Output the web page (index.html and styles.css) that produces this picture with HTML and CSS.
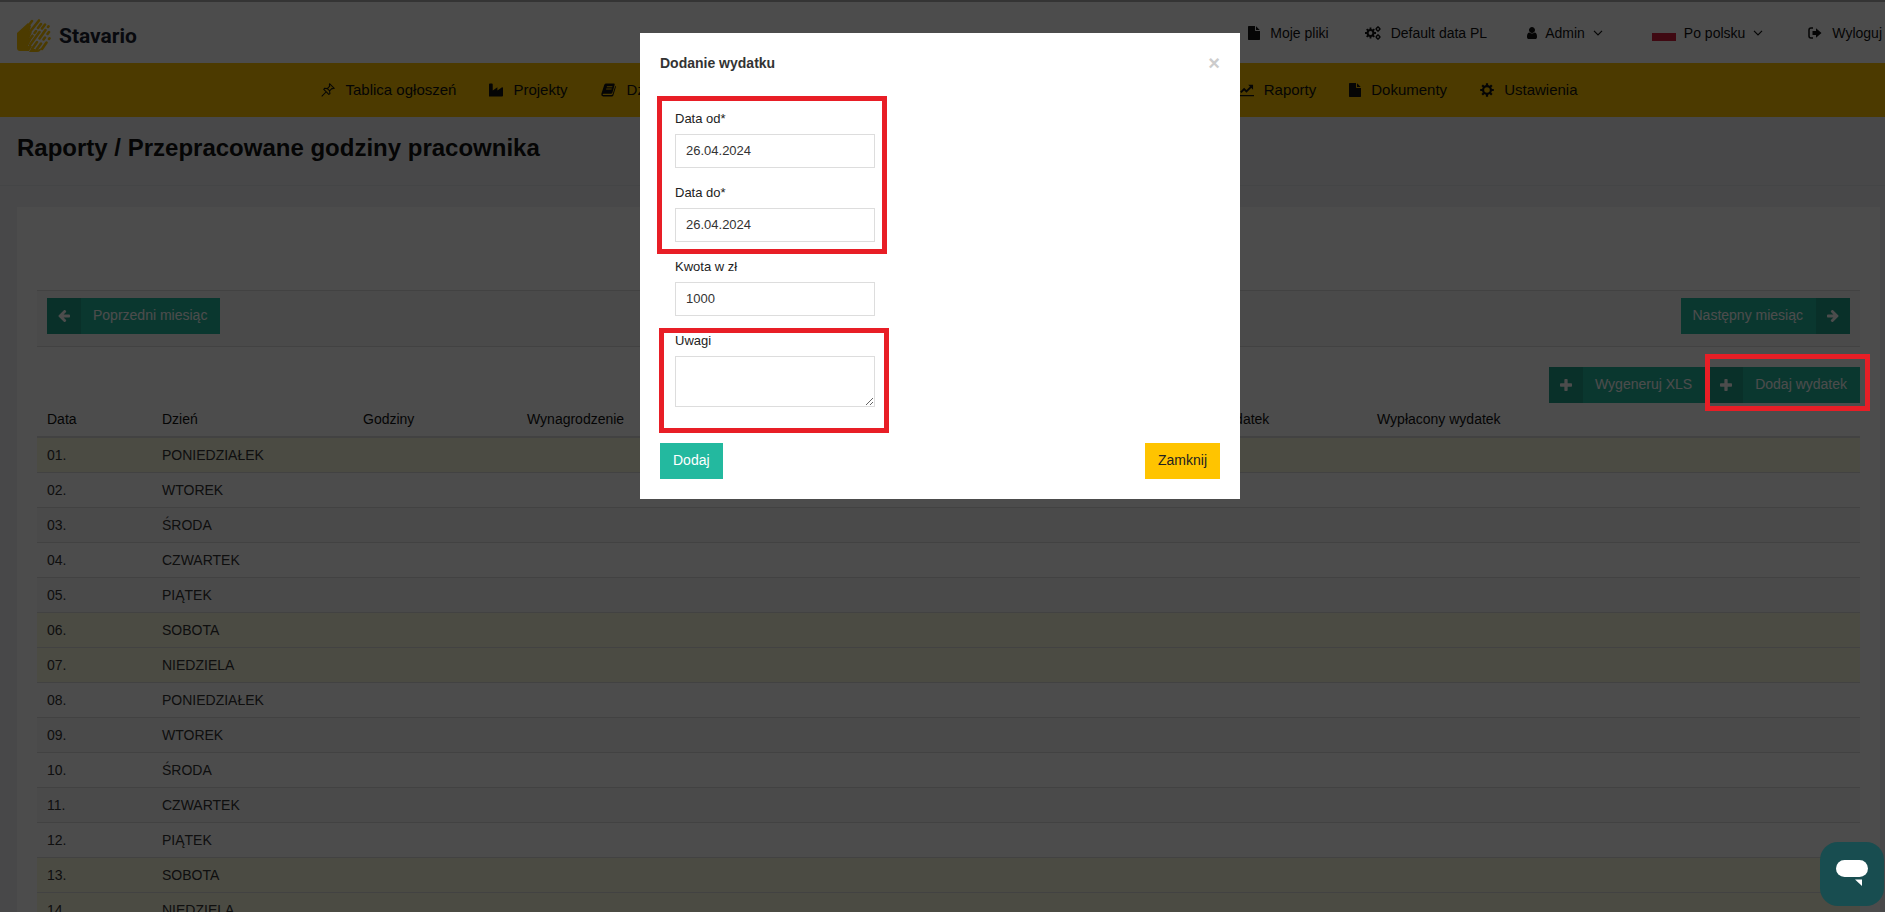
FILE: index.html
```html
<!DOCTYPE html>
<html lang="pl">
<head>
<meta charset="utf-8">
<title>Stavario</title>
<link rel="stylesheet" href="styles.css">
</head>
<body>
<svg class="sprite" aria-hidden="true">
  <symbol id="i-file" viewBox="128 0 1536 1792"><path d="M1152 512v-472q22 14 36 28l408 408q14 14 28 36h-472zm-128 32q0 40 28 68t68 28h544v1056q0 40-28 68t-68 28h-1344q-40 0-68-28t-28-68v-1600q0-40 28-68t68-28h800v544z"/></symbol>
  <symbol id="i-plus" viewBox="192 128 1408 1408"><path d="M1600 736v192q0 40-28 68t-68 28h-416v416q0 40-28 68t-68 28h-192q-40 0-68-28t-28-68v-416h-416q-40 0-68-28t-28-68v-192q0-40 28-68t68-28h416v-416q0-40 28-68t68-28h192q40 0 68 28t28 68v416h416q40 0 68 28t28 68z"/></symbol>
  <symbol id="i-left" viewBox="128 190 1536 1540"><path d="M1664 896v128q0 53-32.5 90.5t-84.5 37.5h-704l293 294q38 36 38 90t-38 90l-75 76q-37 37-90 37-52 0-91-37l-651-652q-37-37-37-90 0-52 37-91l651-650q38-38 91-38 52 0 90 38l75 74q38 38 38 91t-38 91l-293 293h704q52 0 84.5 37.5t32.5 90.5z"/></symbol>
  <symbol id="i-user" viewBox="256 128 1280 1536"><path d="M1536 1399q0 109-62.5 187t-150.5 78h-854q-88 0-150.5-78t-62.5-187q0-85 8.5-160.5t31.5-152 58.5-131 94-89 134.5-34.5q131 128 313 128t313-128q76 0 134.5 34.5t94 89 58.5 131 31.5 152 8.5 160.5zm-256-887q0 159-112.5 271.5t-271.5 112.5-271.5-112.5-112.5-271.5 112.5-271.5 271.5-112.5 271.5 112.5 112.5 271.5z"/></symbol>
  <symbol id="i-cog" viewBox="0 0 14 14"><circle cx="7" cy="7" r="3.9" fill="none" stroke="currentColor" stroke-width="2.2"/><g stroke="currentColor" stroke-width="2.2"><path d="M7 .2v3M7 10.8v3M.2 7h3M10.8 7h3M2.2 2.2l2 2M9.8 9.8l2 2M11.8 2.2l-2 2M4.2 9.8l-2 2"/></g></symbol>
  <symbol id="i-cogs" viewBox="0 0 16 14"><g fill="none" stroke="currentColor"><circle cx="5.5" cy="7" r="2.9" stroke-width="2"/><path stroke-width="1.8" d="M5.5 1.6v2M5.5 10.4v2M0 7h2M9 7h2M1.7 3.2l1.4 1.4M7.9 9.4l1.4 1.4M9.3 3.2 7.9 4.6M3.1 9.4l-1.4 1.4"/><circle cx="13" cy="3" r="1.6" stroke-width="1.4"/><circle cx="13" cy="11" r="1.6" stroke-width="1.4"/><path stroke-width="1.2" d="M13 0v1M13 5v1M10.4 3h1M14.8 3h1M13 8v1M13 13v1M10.4 11h1M14.8 11h1"/></g></symbol>
  <symbol id="i-pin" viewBox="0 0 16 16"><g fill="none" stroke="currentColor" stroke-width="1.2"><path d="M10 1l5 5-1.500.600-.900-.4-2.800 2.800.4 3.200-1.300.800L3.200 7.300 4 6l3.200.4L10 3.600l-.5-1.200zM6 10 .8 15.200M7.200 6.400l3 3"/></g></symbol>
  <symbol id="i-industry" viewBox="0 0 15 14"><path d="M0 14V1q0-1 1-1h2q1 0 1 1v6.500L9 4v3.500L14 4q1-.3 1 1v8q0 1-1 1z"/></symbol>
  <symbol id="i-book" viewBox="0 0 16 14"><path fill-rule="evenodd" d="M5.200.5h7.600q1.200 0 .9 1.200l-2.300 8.100q-.4 1-1.400 1H2.500q-1 0-.7 1.200h8.800q.8 0 1.100-.9L14.300 2.800q.8.4.5 1.400l-2.500 8.400q-.4 1-1.400 1H2.200Q0 13.400.3 11L3.300 1.800Q3.900.6 5.200.5zM6 3.200l-.3 1h5.500l.3-1zM5.300 5.600l-.3 1h5.500l.3-1z"/></symbol>
  <symbol id="i-chart" viewBox="0 0 17 14"><path fill="none" stroke="currentColor" stroke-width="1.500" d="M1 0v13h16"/><path fill="none" stroke="currentColor" stroke-width="2" d="M3 9.500 6.500 6 9 8.500 14 3.500"/><path d="M10.800 1.500H16v5.200z"/></symbol>
  <symbol id="i-out" viewBox="0 0 14 12"><path fill="none" stroke="currentColor" stroke-width="1.500" d="M5 1H3Q1 1 1 3v6q0 2 2 2h2"/><path d="M4.500 4H8V1.200L13.500 6 8 10.800V8H4.500z"/></symbol>
  <symbol id="i-down" viewBox="0 0 10 6"><path fill="none" stroke="currentColor" stroke-width="1.200" d="M1 .8l4 4 4-4"/></symbol>
</svg>

<div class="page">
  <header class="topbar">
    <a class="brand" href="#">
      <svg class="brand-mark" viewBox="0 0 34 33" aria-hidden="true"><path fill="#fdc500" d="M0 14 11 4 14 7 12 14l3-1-3 7 2 1-3 6 4 0-3 5H3q-3 0-3-3z"/><path fill="#fdc500" d="M12 33l2-3 4 0 2 1 5-2-2 3q-1 1-3 1z"/><g stroke="#fdc500" stroke-width="2.600" stroke-linecap="round"><path d="M9 10l6-8M12 14l10-12.500M13 20l2.500-3.300M17.500 14l1.500-2M21 9l3-4M13 26l9.500-13M25 9.500l3-4M15 30l5-7M22.500 19.500l6-8.500M31 8l.5-.7M20 30l4-5.500M26.500 20.500l1.500-2M30.500 15l1.500-2M25 30l4.500-6.500M32 20l.5-.7"/></g></svg>
      <span>Stavario</span>
    </a>
    <nav class="account">
      <a href="#"><svg class="w12"><use href="#i-file"/></svg>Moje pliki</a>
      <a href="#"><svg class="w16"><use href="#i-cogs"/></svg>Default data PL</a>
      <button class="menu" type="button"><svg class="w10"><use href="#i-user"/></svg>Admin<svg class="w10"><use href="#i-down"/></svg></button>
      <button class="menu" type="button"><span class="flag"></span>Po polsku<svg class="w10"><use href="#i-down"/></svg></button>
      <a href="#"><svg class="w14"><use href="#i-out"/></svg>Wyloguj</a>
    </nav>
  </header>

  <nav class="mainnav">
    <div class="mainnav-list">
      <a href="#"><svg class="w16"><use href="#i-pin"/></svg>Tablica ogłoszeń</a>
      <a href="#"><svg class="w14"><use href="#i-industry"/></svg>Projekty</a>
      <a href="#"><svg class="w16"><use href="#i-book"/></svg>Dziennik</a>
      <a class="push" href="#"><svg class="w16"><use href="#i-chart"/></svg>Raporty</a>
      <a href="#"><svg class="w12"><use href="#i-file"/></svg>Dokumenty</a>
      <a href="#"><svg class="w14"><use href="#i-cog"/></svg>Ustawienia</a>
    </div>
  </nav>

  <div class="heading"><h1>Raporty / Przepracowane godziny pracownika</h1></div>

  <main class="panel">
    <div class="months">
      <button class="btn-icon" type="button"><span class="cell"><svg><use href="#i-left"/></svg></span><span class="label">Poprzedni miesiąc</span></button>
      <button class="btn-icon" type="button"><span class="label">Następny miesiąc</span><span class="cell"><svg class="flip"><use href="#i-left"/></svg></span></button>
    </div>
    <div class="actions">
      <button class="btn-icon" type="button"><span class="cell"><svg><use href="#i-plus"/></svg></span><span class="label">Wygeneruj XLS</span></button>
      <button class="btn-icon" type="button"><span class="cell"><svg><use href="#i-plus"/></svg></span><span class="label">Dodaj wydatek</span></button>
    </div>
    <table class="days">
      <colgroup><col class="c-date"><col class="c-day"><col class="c-hours"><col class="c-mid"><col class="c-mid"><col class="c-mid"><col class="c-mid"><col class="c-cost"><col></colgroup>
      <thead><tr><th>Data</th><th>Dzień</th><th>Godziny</th><th>Wynagrodzenie</th><th></th><th></th><th></th><th>Wydatek</th><th>Wypłacony wydatek</th></tr></thead>
      <tbody>
        <tr class="off"><td>01.</td><td>PONIEDZIAŁEK</td><td colspan="7"></td></tr>
        <tr><td>02.</td><td>WTOREK</td><td colspan="7"></td></tr>
        <tr><td>03.</td><td>ŚRODA</td><td colspan="7"></td></tr>
        <tr><td>04.</td><td>CZWARTEK</td><td colspan="7"></td></tr>
        <tr><td>05.</td><td>PIĄTEK</td><td colspan="7"></td></tr>
        <tr class="off"><td>06.</td><td>SOBOTA</td><td colspan="7"></td></tr>
        <tr class="off"><td>07.</td><td>NIEDZIELA</td><td colspan="7"></td></tr>
        <tr><td>08.</td><td>PONIEDZIAŁEK</td><td colspan="7"></td></tr>
        <tr><td>09.</td><td>WTOREK</td><td colspan="7"></td></tr>
        <tr><td>10.</td><td>ŚRODA</td><td colspan="7"></td></tr>
        <tr><td>11.</td><td>CZWARTEK</td><td colspan="7"></td></tr>
        <tr><td>12.</td><td>PIĄTEK</td><td colspan="7"></td></tr>
        <tr class="off"><td>13.</td><td>SOBOTA</td><td colspan="7"></td></tr>
        <tr class="off"><td>14.</td><td>NIEDZIELA</td><td colspan="7"></td></tr>
      </tbody>
    </table>
  </main>
</div>

<div class="backdrop">
  <form class="modal" role="dialog" aria-labelledby="modal-title">
    <div class="modal-head">
      <h2 id="modal-title">Dodanie wydatku</h2>
      <button class="close" type="button" aria-label="Zamknij okno">×</button>
    </div>
    <div class="fields">
      <label for="from">Data od*</label>
      <input id="from" type="text" value="26.04.2024">
      <label for="to">Data do*</label>
      <input id="to" type="text" value="26.04.2024">
      <label for="amount">Kwota w zł</label>
      <input id="amount" type="text" value="1000">
      <label for="notes">Uwagi</label>
      <textarea id="notes"></textarea>
    </div>
    <div class="modal-foot">
      <button class="btn save" type="submit">Dodaj</button>
      <button class="btn cancel" type="button">Zamknij</button>
    </div>
    <span class="mark mark-dates"></span>
    <span class="mark mark-notes"></span>
  </form>
</div>
<span class="mark mark-add"></span>
<button class="chat" type="button" aria-label="Czat"><svg viewBox="0 0 32 28"><rect width="32" height="17" rx="8.500" fill="#fff"/><path fill="#fff" d="M19 19.500h7v6.500z"/></svg></button>
</body>
</html>
```
FILE: styles.css
```css
* { box-sizing: border-box; }
body {
  margin: 0;
  height: 100vh;
  overflow: hidden;
  position: relative;
  background: #f0f2f5;
  color: #333;
  font: 14px/18px "Liberation Sans", Arial, sans-serif;
}
button, input, textarea { font: inherit; color: inherit; border-radius: 0; }
button { border: 0; background: none; padding: 0; cursor: pointer; }
a { color: inherit; text-decoration: none; }
svg { fill: currentColor; flex: none; }
.sprite { position: absolute; width: 0; height: 0; }
.w10 { width: 10px; height: 12px; }
.w12 { width: 12px; height: 14px; }
.w14 { width: 14px; height: 14px; }
.w16 { width: 16px; height: 14px; }

/* Header */
.topbar {
  display: flex;
  justify-content: space-between;
  height: 63px;
  padding: 0 3px 0 17px;
  border-top: 2px solid #adadad;
  background: #fff;
  color: #111;
}
.brand {
  display: flex;
  align-items: center;
  gap: 8px;
  padding-top: 6px;
  font: bold 21px/32px Roboto, sans-serif;
  color: #1c2230;
}
.brand-mark { width: 34px; height: 33px; }
.account { display: flex; align-items: center; gap: 36px; }
.account a, .menu { display: flex; align-items: center; gap: 10px; }
.menu { gap: 8px; padding: 0 9px 0 4px; }
.flag { width: 24px; height: 16px; background: linear-gradient(#fff 50%, #d4213d 50%); }

.mainnav { background: #fdc300; color: #111; padding: 0 20px 0 32px; font-size: 15px; }
.mainnav-list { display: flex; gap: 33px; align-items: center; max-width: 1258px; height: 54px; margin: 0 auto; }
.mainnav a { display: flex; align-items: center; gap: 10px; }
.push { margin-left: auto; }

.heading { height: 69px; padding: 15px 17px; border-bottom: 1px solid #e4e8ea; }
h1 { margin: 0; font-size: 24px; line-height: 32px; color: #111; }

/* Report panel */
.panel { margin: 21px 5px 0 17px; padding: 83px 20px 0; background: #fff; }
.months {
  display: flex;
  justify-content: space-between;
  padding: 7px 10px 12px;
  border: solid #ddd;
  border-width: 1px 0;
  background: #f9f9f9;
}
.actions { display: flex; justify-content: flex-end; gap: 4px; padding-top: 20px; }
.btn-icon { display: flex; height: 36px; background: #23b99f; color: #fff; }
.cell { display: flex; align-items: center; justify-content: center; width: 34px; height: 36px; background: #1fa089; }
.cell svg { width: 12px; height: 12px; }
.flip { transform: scaleX(-1); }
.label { padding: 7px 13px 9px 12px; line-height: 20px; }

.days { width: 100%; table-layout: fixed; border-collapse: separate; border-spacing: 0; }
.days th, .days td { height: 35px; padding: 8px 10px; text-align: left; font-weight: normal; white-space: nowrap; }
.days td { border-top: 1px solid #ddd; }
.days th { color: #111; height: 33px; padding: 6px 10px 8px; }
.days tbody tr:first-child td { border-top-width: 2px; height: 36px; }
.days tbody tr:nth-child(odd) { background: #f9f9f9; }
.days tbody tr.off { background: #fafae2; }
.c-date { width: 115px; }
.c-day { width: 201px; }
.c-hours { width: 164px; }
.c-mid { width: 172px; }
.c-cost { width: 162px; }

/* Dialog */
.backdrop { position: fixed; inset: 0; padding: 33px 5px 0 0; background: rgba(0, 0, 0, .7); }
.modal { position: relative; width: 600px; margin: 0 auto; padding: 20px; background: #fff; }
.modal-head { display: flex; justify-content: space-between; align-items: center; height: 20px; }
h2 { margin: 0; font-size: 14px; line-height: 20px; }
.close { font-size: 20px; font-weight: bold; line-height: 18px; color: #ccc; }
.fields { display: flex; flex-direction: column; width: 230px; padding: 36px 15px 0; font-size: 13px; }
.fields label { line-height: 20px; margin-bottom: 5px; color: #222; }
.fields input, .fields textarea { width: 200px; height: 34px; margin: 0 0 15px; padding: 5px 10px 7px; border: 1px solid #ddd; background: #fff; }
.fields textarea { height: 51px; margin-bottom: 36px; }
.modal-foot { display: flex; justify-content: space-between; }
.btn { height: 36px; padding: 0 13px 2px; }
.save { background: #23b99f; color: #fff; }
.cancel { background: #ffc400; color: #222; }

/* Red callouts */
.mark { position: absolute; border: 5px solid #e81e26; pointer-events: none; }
.mark-dates { left: 17px; top: 63px; width: 230px; height: 158px; }
.mark-notes { left: 19px; top: 295px; width: 230px; height: 105px; }
.mark-add { right: 15px; top: 354px; width: 165px; height: 57px; }

.chat { position: fixed; right: 1px; bottom: 6px; width: 64px; height: 64px; border-radius: 18px; background: #184d50; display: flex; align-items: center; justify-content: center; }
.chat svg { width: 32px; height: 28px; }
```
